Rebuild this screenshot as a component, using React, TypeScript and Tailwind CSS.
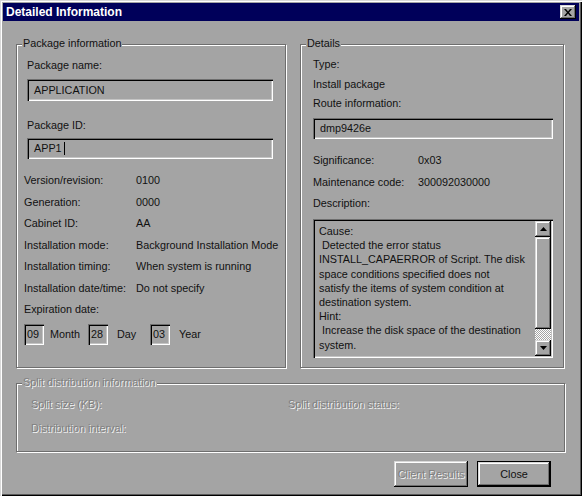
import React from "react";

const face = "bg-[#a4a4a4]";
const sunken =
  "shadow-[inset_1px_1px_0_#6e6e6e,inset_2px_2px_0_#000,inset_-1px_-1px_0_#fff,inset_-2px_-2px_0_#c4c4c4]";
const raised =
  "shadow-[inset_-1px_-1px_0_#000,inset_1px_1px_0_#d8d8d8,inset_-2px_-2px_0_#6e6e6e,inset_2px_2px_0_#fff]";
const disabled = "text-[#808080] [text-shadow:1px_1px_0_#f2f2f2]";

const Group = ({
  title,
  className,
  dim,
  children,
}: {
  title: string;
  className: string;
  dim?: boolean;
  children?: React.ReactNode;
}) => (
  <div
    className={`relative border border-[#6e6e6e] shadow-[inset_1px_1px_0_#fff,1px_1px_0_#fff] ${className}`}
  >
    <span
      className={`absolute left-[5px] top-[-8px] px-[1px] leading-[13px] ${face} ${dim ? disabled : ""}`}
    >
      {title}
    </span>
    {children}
  </div>
);

const Field = ({ value, className, caret }: { value: string; className: string; caret?: boolean }) => (
  <div className={`flex items-center ${sunken} ${className}`}>
    <span className="whitespace-pre">{value}</span>
    {caret && <span className="ml-[2px] h-[13px] w-px bg-black" />}
  </div>
);

const Row = ({ label, value, w, h }: { label: string; value?: string; w: string; h: string }) => (
  <div className={`flex items-center ${h}`}>
    <span className={`${w} shrink-0`}>{label}</span>
    {value && <span>{value}</span>}
  </div>
);

const Arrow = ({ up }: { up?: boolean }) => (
  <div className={`flex h-[16px] w-[16px] items-center justify-center ${face} ${raised}`}>
    <svg width="7" height="4" viewBox="0 0 7 4">
      <polygon points={up ? "3.5,0 7,4 0,4" : "0,0 7,0 3.5,4"} fill="#000" />
    </svg>
  </div>
);

const lines = [
  "Cause:",
  " Detected the error status",
  "INSTALL_CAPAERROR of Script. The disk",
  "space conditions specified does not",
  "satisfy the items of system condition at",
  "destination system.",
  "Hint:",
  " Increase the disk space of the destination",
  "system.",
];

export default function App() {
  return (
    <div
      className={`h-[496px] w-[582px] p-[3px] text-[10.8px] leading-[13px] text-[#111] font-['Liberation_Sans',Arial,sans-serif] ${face} shadow-[inset_1px_1px_0_#d8d8d8,inset_2px_2px_0_#fff,inset_-1px_-1px_0_#000,inset_-2px_-2px_0_#5a5a5a]`}
    >
      <div className="flex h-[18px] items-center justify-between bg-[#00005a] pl-[3px] pr-[3px]">
        <span className="text-[12px] font-bold text-white">Detailed Information</span>
        <div className={`flex h-[14px] w-[16px] items-center justify-center ${face} ${raised}`}>
          <svg width="8" height="7" viewBox="0 0 8 7">
            <path d="M0 0h2l2 2.5L6 0h2L5 3.5 8 7H6L4 4.5 2 7H0l3-3.5z" fill="#000" />
          </svg>
        </div>
      </div>

      <div className="pl-[13px] pt-[23px]">
        <div className="flex gap-[14px]">
          <Group title="Package information" className="h-[324px] w-[270px] pl-[7px] pt-[14px]">
            <div className="ml-[3px] flex h-[13px] items-center">Package name:</div>
            <Field value="APPLICATION" className="ml-[3px] mt-[7px] h-[22px] w-[246px] pl-[7px]" />
            <div className="ml-[3px] mt-[18px] flex h-[13px] items-center">Package ID:</div>
            <Field value="APP1" caret className="ml-[3px] mt-[6px] h-[21px] w-[246px] pl-[7px]" />
            <div className="mt-[11px]">
              <Row label="Version/revision:" value="0100" w="w-[112px]" h="h-[21.5px]" />
              <Row label="Generation:" value="0000" w="w-[112px]" h="h-[21.5px]" />
              <Row label="Cabinet ID:" value="AA" w="w-[112px]" h="h-[21.5px]" />
              <Row label="Installation mode:" value="Background Installation Mode" w="w-[112px]" h="h-[21.5px]" />
              <Row label="Installation timing:" value="When system is running" w="w-[112px]" h="h-[21.5px]" />
              <Row label="Installation date/time:" value="Do not specify" w="w-[112px]" h="h-[21.5px]" />
              <Row label="Expiration date:" w="w-[112px]" h="h-[21.5px]" />
            </div>
            <div className="mt-[3px] flex items-center">
              <Field value="09" className="h-[21px] w-[20px] pl-[3px]" />
              <span className="ml-[6px] w-[38px]">Month</span>
              <Field value="28" className="h-[21px] w-[20px] pl-[3px]" />
              <span className="ml-[9px] w-[33px]">Day</span>
              <Field value="03" className="h-[21px] w-[20px] pl-[3px]" />
              <span className="ml-[9px]">Year</span>
            </div>
          </Group>

          <Group title="Details" className="h-[324px] w-[264px] pl-[12px] pt-[10px]">
            <Row label="Type:" w="w-[105px]" h="h-[19.5px]" />
            <Row label="Install package" w="w-[105px]" h="h-[19.5px]" />
            <Row label="Route information:" w="w-[105px]" h="h-[19.5px]" />
            <Field value="dmp9426e" className="mt-[4.5px] h-[21px] w-[240px] pl-[7px]" />
            <div className="mt-[11px]">
              <Row label="Significance:" value="0x03" w="w-[105px]" h="h-[21.5px]" />
              <Row label="Maintenance code:" value="300092030000" w="w-[105px]" h="h-[21.5px]" />
              <Row label="Description:" w="w-[105px]" h="h-[21.5px]" />
            </div>
            <div className={`mt-[4.5px] flex h-[139px] w-[240px] p-[2px] ${sunken}`}>
              <div className="flex-1 pl-[4px] pt-[3px] leading-[14.2px]">
                {lines.map((l, i) => (
                  <div key={i} className="whitespace-pre">
                    {l}
                  </div>
                ))}
              </div>
              <div className="flex w-[16px] flex-col">
                <Arrow up />
                <div className={`h-[92px] ${face} ${raised}`} />
                <div className="h-[11px] bg-[repeating-conic-gradient(#ffffff_0_25%,#a4a4a4_0_50%)] bg-[length:2px_2px]" />
                <Arrow />
              </div>
            </div>
          </Group>
        </div>

        <Group
          title="Split distribution information"
          dim
          className={`mt-[15px] h-[69px] w-[549px] pl-[14px] pt-[14px] ${disabled}`}
        >
          <div className="flex h-[13px] items-center">
            <span className="w-[257px]">Split size (KB):</span>
            <span>Split distribution status:</span>
          </div>
          <div className="mt-[11px] flex h-[13px] items-center">Distribution interval:</div>
        </Group>

        <div className="mt-[9px] flex w-[535px] justify-end gap-[9px]">
          <div className={`flex h-[26px] w-[74px] items-center justify-center ${raised}`}>
            <span className={disabled}>Client Results</span>
          </div>
          <div className="h-[26px] w-[74px] border border-black">
            <div className={`flex h-full w-full items-center justify-center ${raised}`}>Close</div>
          </div>
        </div>
      </div>
    </div>
  );
}
